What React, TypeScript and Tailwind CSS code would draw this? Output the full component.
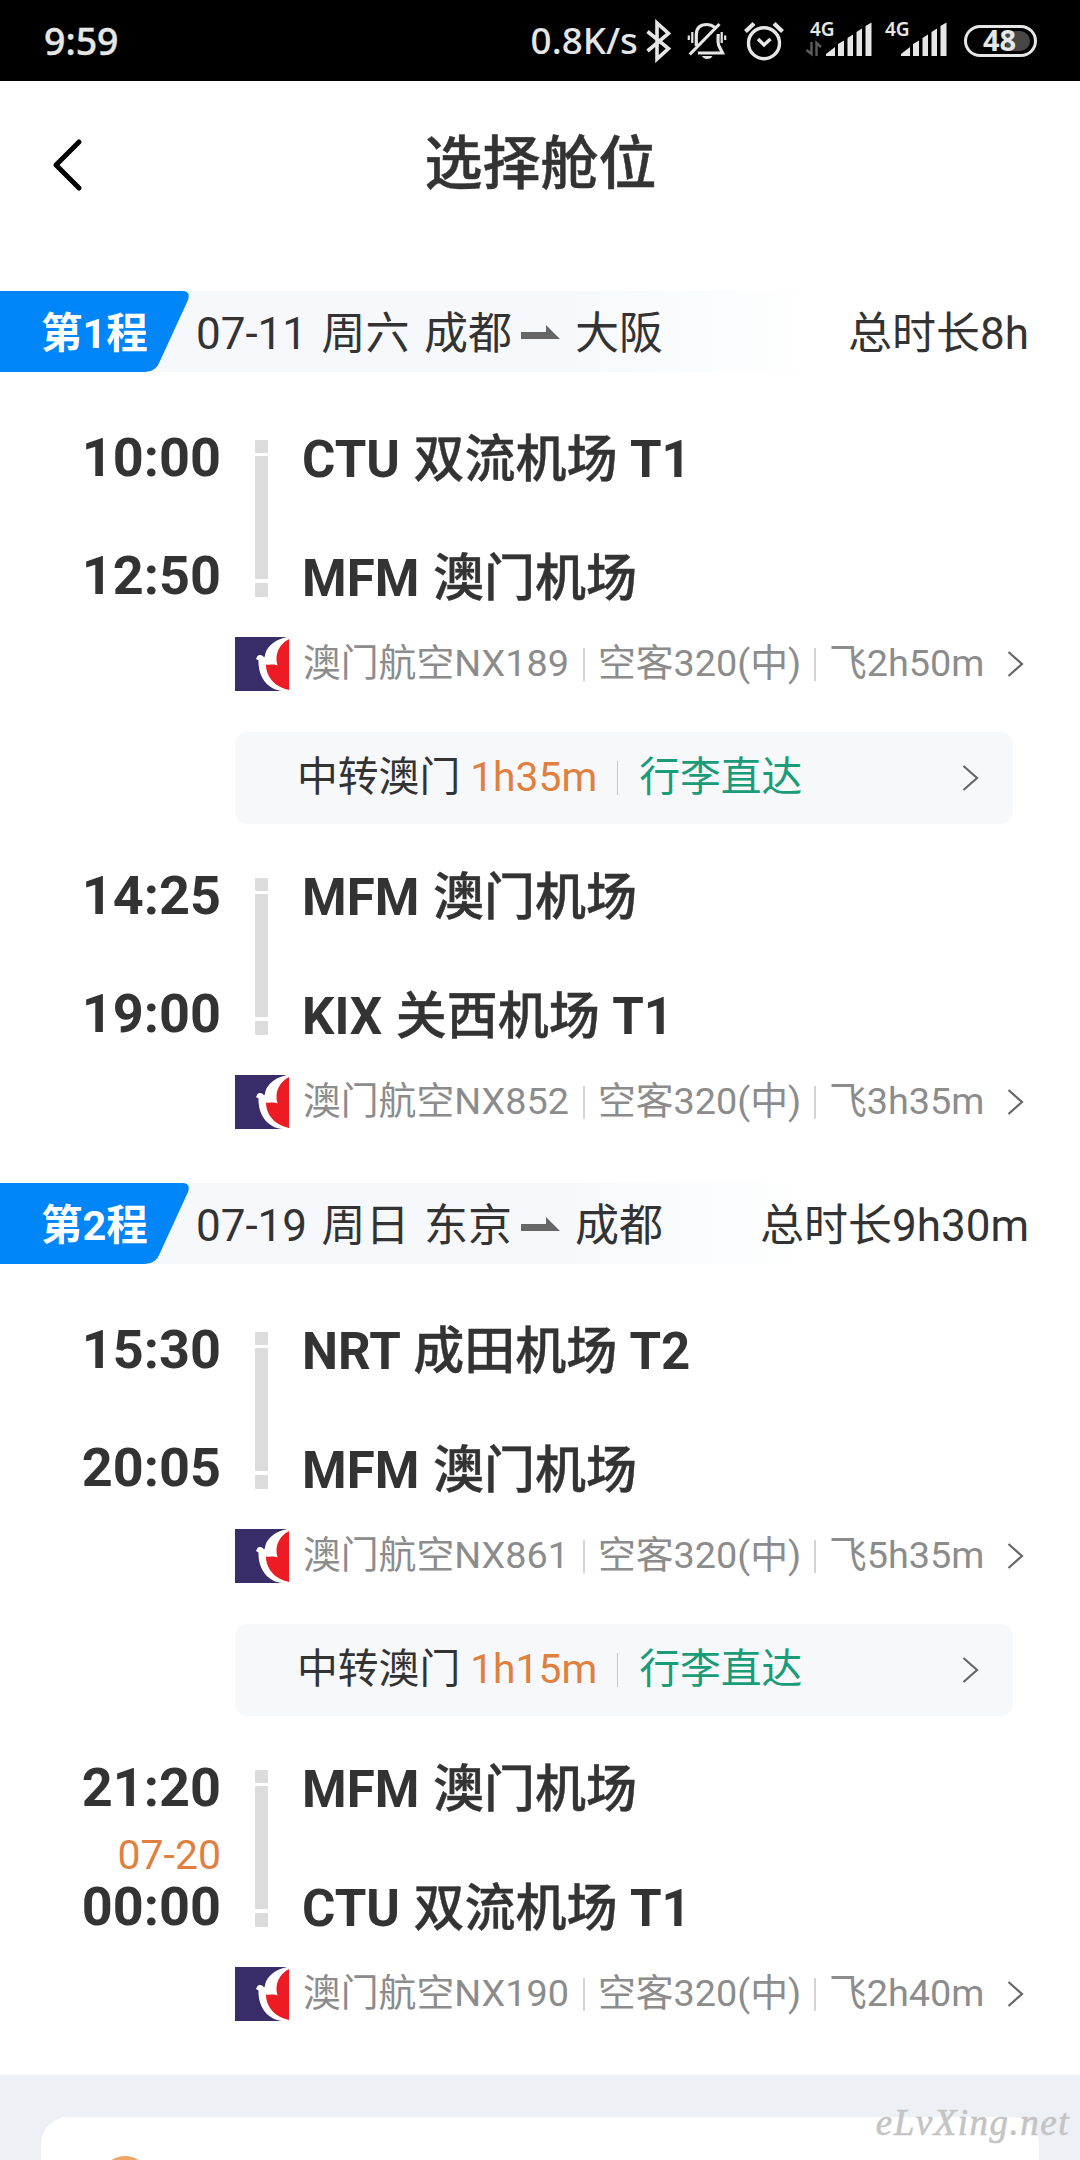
import React from "react";

interface Flight {
  depTime: string;
  depCode: string;
  depName: string;
  depTerminal?: string;
  arrTime: string;
  arrDate?: string;
  arrCode: string;
  arrName: string;
  arrTerminal?: string;
  flightNo: string;
  plane: string;
  duration: string;
}

interface Leg {
  title: string;
  date: string;
  from: string;
  to: string;
  total: string;
  flights: Flight[];
  transfer: string;
}

const legs: Leg[] = [
  {
    title: "第1程",
    date: "07-11 周六",
    from: "成都",
    to: "大阪",
    total: "总时长8h",
    transfer: "1h35m",
    flights: [
      {
        depTime: "10:00", depCode: "CTU", depName: "双流机场", depTerminal: "T1",
        arrTime: "12:50", arrCode: "MFM", arrName: "澳门机场",
        flightNo: "澳门航空NX189", plane: "空客320(中)", duration: "飞2h50m",
      },
      {
        depTime: "14:25", depCode: "MFM", depName: "澳门机场",
        arrTime: "19:00", arrCode: "KIX", arrName: "关西机场", arrTerminal: "T1",
        flightNo: "澳门航空NX852", plane: "空客320(中)", duration: "飞3h35m",
      },
    ],
  },
  {
    title: "第2程",
    date: "07-19 周日",
    from: "东京",
    to: "成都",
    total: "总时长9h30m",
    transfer: "1h15m",
    flights: [
      {
        depTime: "15:30", depCode: "NRT", depName: "成田机场", depTerminal: "T2",
        arrTime: "20:05", arrCode: "MFM", arrName: "澳门机场",
        flightNo: "澳门航空NX861", plane: "空客320(中)", duration: "飞5h35m",
      },
      {
        depTime: "21:20", depCode: "MFM", depName: "澳门机场",
        arrTime: "00:00", arrDate: "07-20", arrCode: "CTU", arrName: "双流机场", arrTerminal: "T1",
        flightNo: "澳门航空NX190", plane: "空客320(中)", duration: "飞2h40m",
      },
    ],
  },
];

const Signal = ({ data }: { data?: boolean }) => (
  <div className="relative h-[40px] w-[66px]">
    <span className="absolute left-[4px] -top-px font-['Noto_Sans'] text-[19px] font-semibold leading-[19px]">4G</span>
    <svg className="absolute left-0 top-0" width="66" height="40" viewBox="0 0 66 40" fill="#e6e6e6">
      {data && (
        <g stroke="#5c5c5c" strokeWidth="2.400" fill="none">
          <path d="M5.500 21V33L0.500 29M10.500 35V22L15 26" />
        </g>
      )}
      <path d="M20 35V33L29 26V35Z" />
      <path d="M32 35V23L38 19.500V35Z" />
      <path d="M41.500 35V17L47 13.500V35Z" />
      <path d="M50.500 35V11L56 7.500V35Z" />
      <path d="M59.500 35V5L65.500 1.500V35Z" />
    </svg>
  </div>
);

const StatusBar = () => (
  <div className="flex h-[81px] items-center bg-black pl-[44px] pr-[43px] font-['Noto_Sans'] text-[#e6e6e6]">
    <span className="text-[37.500px] font-medium leading-none [-webkit-text-stroke:0.4px_#e6e6e6]">9:59</span>
    <span className="ml-auto text-[36.800px] font-medium leading-none">0.8K/s</span>
    <svg className="ml-[8px]" width="26" height="44" viewBox="0 0 26 44" fill="none" stroke="#e6e6e6" strokeWidth="3.600">
      <path d="M1.500 12.500L22.500 29.500L11 40V4L22.500 14.500L1.500 32" />
    </svg>
    <svg className="ml-[14px]" width="42" height="44" viewBox="0 0 42 44" fill="none" stroke="#e6e6e6" strokeWidth="3.200">
      <path d="M10.300 27V16C10.300 8 15 5.500 21 5.500C24 5.500 26.500 6.500 29 8.500M32.300 15C32 19 31.500 24 33 27L36.500 34H12M3.700 35.500L33.500 5" />
      <path d="M6.300 13V24M2.800 16.500V21M35.700 13V24M39.200 16.500V21" strokeWidth="2.200" />
      <path d="M16 37H26.500C25 41 17.500 41 16 37Z" fill="#e6e6e6" stroke="none" />
    </svg>
    <svg className="ml-[15px]" width="42" height="44" viewBox="0 0 42 44" fill="none" stroke="#e6e6e6" strokeWidth="3.400">
      <circle cx="21" cy="24.200" r="15.500" />
      <path d="M15 20L21 26L27.500 20" />
      <path d="M2.500 12.500L11 4.500M31 4.500L39.500 12.500" strokeWidth="4.200" />
    </svg>
    <div className="ml-[21px]"><Signal data /></div>
    <div className="ml-[9px]"><Signal /></div>
    <div className="relative ml-[17px] h-[32px] w-[73px] rounded-full border-[3px] border-[#e6e6e6] text-center">
      <div className="absolute right-[4px] top-[3px] h-[20px] w-[24px] rounded-r-full bg-[#474747]" />
      <span className="relative -left-px -top-px block text-[29px] font-bold leading-[26px]">48</span>
    </div>
  </div>
);

const Chevron = () => (
  <svg width="17" height="28" viewBox="0 0 17 28" fill="none" stroke="#666" strokeWidth="2.200">
    <path d="M1.500 2L15 14L1.500 26" />
  </svg>
);

const AirlineLogo = () => (
  <svg className="shrink-0" width="54" height="54" viewBox="0 0 54 54">
    <rect width="54" height="54" fill="#382c69" />
    <path d="M54 0H52C42 2 33 8 30.500 16C30 18 30 20 29 20.500C28 17.500 23 17 22 20L21 22L23.500 23.500C23 39 32 53 48 54H54Z" fill="#fff" />
    <path d="M54 2C45 7 39 16 42.500 28.500C39 26.500 35 28.500 31 27.500C31 40 40 50 54 53Z" fill="#ed1c24" />
  </svg>
);

const Airport = ({ code, name, terminal }: { code: string; name: string; terminal?: string }) => (
  <div className="flex h-[60px] items-center whitespace-pre text-[51px] leading-[60px] font-bold [word-spacing:1px]">
    {code} <span className="font-medium [-webkit-text-stroke:0.4px_#333]">{name}</span>{terminal && ` ${terminal}`}
  </div>
);

const FlightBlock = ({ flight }: { flight: Flight }) => (
  <div>
    <div className="flex h-[179px] pl-[60px]">
      <div className="flex w-[161px] flex-col items-end pt-px text-[54px] font-bold leading-[60px]">
        <div>{flight.depTime}</div>
        <div className="h-[59px] pt-[15px] text-[41px] font-normal leading-[44px] text-[#e07f3e]">{flight.arrDate}</div>
        <div>{flight.arrTime}</div>
      </div>
      <div className="ml-[34px] mt-[13px] flex w-[13px] flex-col gap-[3px]">
        <div className="h-[13px] rounded-[1px] bg-[#dcdcdc]" />
        <div className="h-[123px] rounded-[1px] bg-[#dcdcdc]" />
        <div className="mt-px h-[14px] rounded-[1px] bg-[#dcdcdc]" />
      </div>
      <div className="ml-[34px] flex flex-col gap-[59px] pt-[3px]">
        <Airport code={flight.depCode} name={flight.depName} terminal={flight.depTerminal} />
        <Airport code={flight.arrCode} name={flight.arrName} terminal={flight.arrTerminal} />
      </div>
    </div>
    <div className="mt-[31px] flex h-[54px] items-center pl-[235px] text-[37.800px] leading-[52px] text-[#8c8c8c]">
      <AirlineLogo />
      <div className="ml-[14px] w-[280px] whitespace-nowrap pb-[2px]">{flight.flightNo}</div>
      <div className="h-[33px] w-[2px] bg-[#d4d4d4]" />
      <div className="ml-[13px] w-[216px] whitespace-nowrap pb-[2px]">{flight.plane}</div>
      <div className="h-[33px] w-[2px] bg-[#d4d4d4]" />
      <div className="ml-[13px] w-[178px] whitespace-nowrap pb-[2px]">{flight.duration}</div>
      <Chevron />
    </div>
  </div>
);

const Transfer = ({ time }: { time: string }) => (
  <div className="ml-[235px] mt-[41px] mb-[41px] flex h-[92px] w-[778px] items-center rounded-[13px] bg-[#f6f8fa] pl-[62px] pr-[34px] text-[40.800px]">
    <span className="pb-px">中转澳门</span>
    <span className="ml-[10px] w-[147px] pb-px text-[#e07f3e]">{time}</span>
    <div className="h-[34px] w-px bg-[#c8c8c8]" />
    <span className="ml-[21px] pb-px text-[#1a9c78]">行李直达</span>
    <div className="ml-auto"><Chevron /></div>
  </div>
);

const LegHeader = ({ leg }: { leg: Leg }) => (
  <div className="flex h-[81px] items-center bg-[linear-gradient(to_right,#f6f8fb_560px,#ffffff_820px)] pr-[51px] text-[44px]">
    <div className="relative h-[81px] w-[189px]">
      <svg className="absolute left-0 top-0" width="189" height="81" viewBox="0 0 189 81">
        <path d="M0 0H182Q191 0 188 9L160 70Q156 81 145 81H0Z" fill="#0086f9" />
      </svg>
      <span className="relative block pl-[41px] pt-[2px] text-[41.500px] font-bold leading-[81px] text-white">{leg.title}</span>
    </div>
    <span className="ml-[7px] whitespace-pre pt-[4px] [word-spacing:3.500px]">{leg.date} {leg.from}</span>
    <svg className="ml-[9px]" width="39" height="14" viewBox="0 0 39 14">
      <path d="M0 7H25V0L39 14H0Z" fill="#666" />
    </svg>
    <span className="ml-[15px] pt-[4px]">{leg.to}</span>
    <span className="ml-auto pt-[4px]">{leg.total}</span>
  </div>
);

const App = () => {
  return (
    <div className="flex h-[2160px] w-[1080px] flex-col overflow-hidden bg-white font-['Roboto','Noto_Sans_CJK_SC',sans-serif] text-[#333]">
      <StatusBar />
      <div className="flex h-[210px] items-start pt-[49px]">
        <div className="flex h-[70px] w-[140px] items-center pl-[51px]">
          <svg width="33" height="54" viewBox="0 0 33 54" fill="none" stroke="#000" strokeWidth="5" strokeLinecap="round" strokeLinejoin="round">
            <path d="M28 4L5 27L28 50" />
          </svg>
        </div>
        <h1 className="flex-1 pl-px text-center text-[58px] font-medium leading-[68px] [-webkit-text-stroke:0.5px_#333]">选择舱位</h1>
        <div className="w-[140px]" />
      </div>

      {legs.map((leg) => (
        <div key={leg.title} className="h-[892px] shrink-0">
          <LegHeader leg={leg} />
          <div className="pt-[55px]">
            <FlightBlock flight={leg.flights[0]} />
            <Transfer time={leg.transfer} />
            <FlightBlock flight={leg.flights[1]} />
          </div>
        </div>
      ))}

      <div className="relative h-[85px] bg-[#edf0f5] px-[41px] pt-[42px]">
        <div className="h-[43px] overflow-hidden rounded-t-[27px] bg-white pl-[60px] pt-[39px]">
          <div className="h-[48px] w-[48px] rounded-full bg-[#f0a468]" />
        </div>
        <span className="absolute right-[10px] top-[26px] font-['Liberation_Serif'] text-[37px] italic leading-[44px] tracking-[1.500px] text-[#c4c4c4] [-webkit-text-stroke:0.6px_#c4c4c4]">
          eLvXing.net
        </span>
      </div>
    </div>
  );
};

export default App;
